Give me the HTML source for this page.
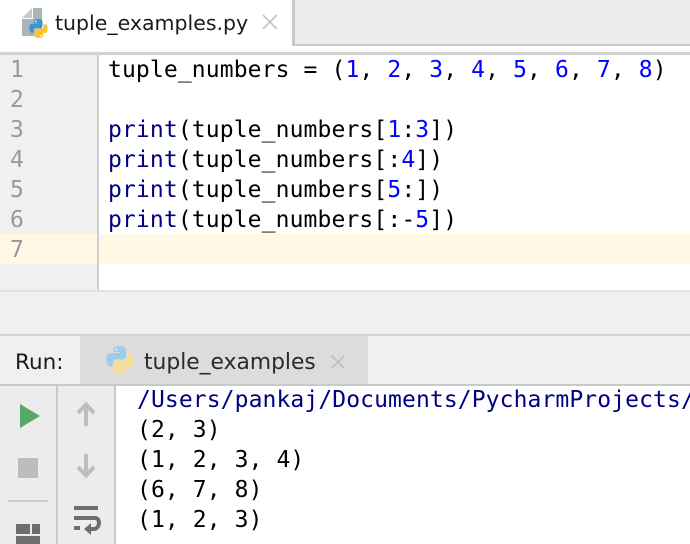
<!DOCTYPE html>
<html><head><meta charset="utf-8"><style>
html,body{margin:0;padding:0}
body{width:690px;height:544px;position:relative;overflow:hidden;background:#fff;font-family:"DejaVu Sans Mono",monospace}
div{position:absolute}
.l{left:108px;font-size:23px;letter-spacing:.12px;line-height:30px;height:30px;white-space:pre;color:#000}
.o{left:137px;font-size:23px;letter-spacing:.1px;line-height:30px;height:30px;white-space:pre;color:#000}
.n{left:10px;width:16px;font-size:23px;line-height:30px;height:30px;color:#999}
b{font-weight:normal;color:#0000ff}
i{font-style:normal;color:#000080}
</style></head><body>
<div style="left:0;top:0;width:292px;height:52px;background:#fff"></div>
<div style="left:292px;top:0;width:398px;height:45px;background:#ececec"></div>
<div style="left:292px;top:0;width:3px;height:46px;background:#c9c9c9"></div>
<div style="left:292px;top:44px;width:398px;height:2px;background:#c9c9c9"></div>
<div style="left:0;top:52px;width:690px;height:3px;background:#d1d1d1"></div>
<svg style="position:absolute;left:22px;top:8px" width="28" height="30" viewBox="0 0 28 30">
<path d="M0 10L10 0V10Z" fill="#c3c9cd"/><path d="M0 11H11V0H20V28H0Z" fill="#a9b4bb"/>
</svg>
<svg style="position:absolute;left:29px;top:19px" width="19" height="19" viewBox="1 1 26 26">
<path d="M13.800 1C7.500 1 7.900 3.700 7.900 3.700V6.600h6v.9H5.600S1.500 7 1.500 13.600s3.600 6.300 3.600 6.300h2.100v-3c0-3.500 3-3.500 3-3.500h6s3.300 0 3.300-3.200V4.800S20 1 13.800 1z" fill="#3d94cf"/>
<path transform="rotate(180 14 14)" d="M13.800 1C7.500 1 7.900 3.700 7.900 3.700V6.600h6v.9H5.600S1.500 7 1.500 13.600s3.600 6.300 3.600 6.300h2.100v-3c0-3.500 3-3.500 3-3.500h6s3.300 0 3.300-3.200V4.800S20 1 13.800 1z" fill="#f7c52e"/>
<circle cx="10.500" cy="4" r="1.200" fill="#fff"/><circle cx="17.500" cy="24" r="1.200" fill="#fff"/>
</svg>
<div style="left:55px;top:8px;font-family:'DejaVu Sans',sans-serif;font-size:20.500px;line-height:30px;white-space:pre;color:#1a1a1a">tuple_examples.py</div>
<svg style="position:absolute;left:262px;top:13px" width="16" height="18" viewBox="0 0 16 18"><path d="M1 2L15 16M15 2L1 16" stroke="#c4c4c4" stroke-width="1.700" fill="none"/></svg>

<div style="left:0;top:55px;width:97px;height:236px;background:#f0f0f0"></div>
<div style="left:97px;top:55px;width:2px;height:236px;background:#d0d0d0"></div>
<div style="left:0;top:234px;width:97px;height:30px;background:#fff8e4"></div>
<div style="left:99px;top:234px;width:591px;height:30px;background:#fff8e4"></div>
<div class="n" style="top:55px">1</div>
<div class="n" style="top:85px">2</div>
<div class="n" style="top:115px">3</div>
<div class="n" style="top:145px">4</div>
<div class="n" style="top:175px">5</div>
<div class="n" style="top:205px">6</div>
<div class="n" style="top:235px">7</div>
<div class="l" style="top:55px">tuple_numbers = (<b>1</b>, <b>2</b>, <b>3</b>, <b>4</b>, <b>5</b>, <b>6</b>, <b>7</b>, <b>8</b>)</div>
<div class="l" style="top:115px"><i>print</i>(tuple_numbers[<b>1</b>:<b>3</b>])</div>
<div class="l" style="top:145px"><i>print</i>(tuple_numbers[:<b>4</b>])</div>
<div class="l" style="top:175px"><i>print</i>(tuple_numbers[<b>5</b>:])</div>
<div class="l" style="top:205px"><i>print</i>(tuple_numbers[:-<b>5</b>])</div>

<div style="left:0;top:290px;width:690px;height:2px;background:#e2e2e2"></div>
<div style="left:0;top:292px;width:690px;height:42px;background:#f0f0f0"></div>
<div style="left:0;top:334px;width:690px;height:2px;background:#d4d4d4"></div>
<div style="left:0;top:336px;width:690px;height:48px;background:#f0f0f0"></div>
<div style="left:80px;top:336px;width:288px;height:48px;background:#dcdcdc"></div>
<div style="left:0;top:384px;width:690px;height:2px;background:#c9c9c9"></div>
<div style="left:15px;top:348px;font-family:'DejaVu Sans',sans-serif;font-size:21.500px;line-height:30px;color:#1a1a1a">Run:</div>
<svg style="position:absolute;left:106px;top:346px" width="28" height="28" viewBox="1 1 26 26">
<path d="M13.800 1C7.500 1 7.900 3.700 7.900 3.700V6.600h6v.9H5.600S1.500 7 1.500 13.600s3.600 6.300 3.600 6.300h2.100v-3c0-3.500 3-3.500 3-3.500h6s3.300 0 3.300-3.200V4.800S20 1 13.800 1z" fill="#9dcce6"/>
<path transform="rotate(180 14 14)" d="M13.800 1C7.500 1 7.900 3.700 7.900 3.700V6.600h6v.9H5.600S1.500 7 1.500 13.600s3.600 6.300 3.600 6.300h2.100v-3c0-3.500 3-3.500 3-3.500h6s3.300 0 3.300-3.200V4.800S20 1 13.800 1z" fill="#f2df93"/>
<circle cx="10.500" cy="4" r="1.200" fill="#dcdcdc"/><circle cx="17.500" cy="24" r="1.200" fill="#dcdcdc"/>
</svg>
<div style="left:144px;top:348px;font-family:'DejaVu Sans',sans-serif;font-size:21.800px;line-height:30px;white-space:pre;color:#2a2a2a">tuple_examples</div>
<svg style="position:absolute;left:330px;top:354px" width="16" height="16" viewBox="0 0 16 16"><path d="M1.500 1.500L14.500 14.500M14.500 1.500L1.500 14.500" stroke="#c0c0c0" stroke-width="1.700" fill="none"/></svg>

<div style="left:0;top:386px;width:114px;height:158px;background:#ececec"></div>
<div style="left:56px;top:386px;width:2px;height:158px;background:#c9c9c9"></div>
<div style="left:114px;top:386px;width:2px;height:158px;background:#c9c9c9"></div>
<svg style="position:absolute;left:0;top:386px" width="114" height="158" viewBox="0 0 114 158">
<path d="M20 18L40 30L20 42Z" fill="#59a869"/>
<rect x="18" y="72" width="20" height="20" fill="#bdbdbd"/>
<rect x="8" y="114" width="40" height="2" fill="#cdcdcd"/>
<path d="M16 138h14v10H16zM32 138h8v10h-8zM16 150h24v8H16z" fill="#6e6e6e"/>
<path d="M86 18v22" stroke="#bdbdbd" stroke-width="4" fill="none"/><path d="M78 27L86 18.500L94 27" stroke="#bdbdbd" stroke-width="4" fill="none"/>
<path d="M86 68v22" stroke="#bdbdbd" stroke-width="4" fill="none"/><path d="M78 81L86 89.500L94 81" stroke="#bdbdbd" stroke-width="4" fill="none"/>
<rect x="74" y="120" width="24" height="4" fill="#6e6e6e"/>
<path d="M74 132h21c3 0 4 2.500 4 5s-2 6-5 6h-4" stroke="#6e6e6e" stroke-width="4" fill="none"/>
<path d="M91 137L84 143L91 149Z" fill="#6e6e6e"/>
<rect x="74" y="140" width="6" height="4" fill="#6e6e6e"/>
</svg>
<div class="o" style="top:385px"><i>/Users/pankaj/Documents/PycharmProjects/</i></div>
<div class="o" style="top:415px">(2, 3)</div>
<div class="o" style="top:445px">(1, 2, 3, 4)</div>
<div class="o" style="top:475px">(6, 7, 8)</div>
<div class="o" style="top:505px">(1, 2, 3)</div>
</body></html>
